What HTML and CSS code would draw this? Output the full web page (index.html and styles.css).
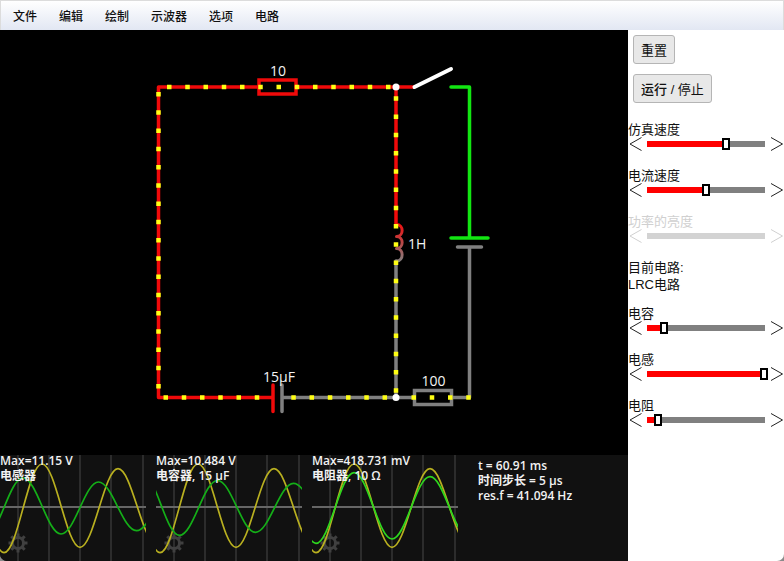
FILE: index.html
```html
<!DOCTYPE html>
<html lang="zh-CN">
<head>
<meta charset="utf-8">
<title>LRC电路</title>
<link rel="stylesheet" href="styles.css">
</head>
<body>
<div class="app">
  <nav class="menubar">
    <button type="button">文件</button>
    <button type="button">编辑</button>
    <button type="button">绘制</button>
    <button type="button">示波器</button>
    <button type="button">选项</button>
    <button type="button">电路</button>
  </nav>
  <div class="workspace">
    <main class="stage">
      <svg class="circuit" viewBox="0 30 628 425" preserveAspectRatio="xMidYMid meet">
        <defs>
          <linearGradient id="coil" gradientUnits="userSpaceOnUse" x1="0" y1="224" x2="0" y2="262">
            <stop offset="0" stop-color="#f01010"/>
            <stop offset="1" stop-color="#808080"/>
          </linearGradient>
        </defs>
        <g class="wire gray">
          <path d="M396 261V397.5M282 397.5H414M451 397.5H469.5V247M457.5 247H481.5M282 385V411.500"/>
          <rect x="414.500" y="390.500" width="37" height="14"/>
        </g>
        <g class="wire red">
          <path d="M273 397.5H158.500V87H259M296 87H414M396 87V224M273 385V411.500"/>
          <rect x="259" y="80" width="37" height="14"/>
        </g>
        <path class="wire coil" d="M396.500 224.500C404 224.500 404 236.500 396.500 236.500C404 236.500 404 248.500 396.500 248.500C404 248.500 404 261 396.500 261"/>
        <path class="wire green" d="M451 87H469.500V238M451 238H488"/>
        <path class="wire white" d="M414.500 87L451 69"/>
        <g class="charge">
          <path d="M167 87H392"/>
          <path d="M158.500 92V400"/>
          <path d="M163.500 397.500H260"/>
          <path d="M291.300 397.500H388"/>
          <path d="M411.500 397.500H471"/>
          <path d="M396 96.300V394"/>
        </g>
        <circle class="node" cx="396" cy="87" r="3.500"/>
        <circle class="node" cx="396" cy="397.500" r="3.500"/>
        <g class="value">
          <text x="278" y="76" text-anchor="middle">10</text>
          <text x="408" y="249">1H</text>
          <text x="279" y="382" text-anchor="middle">15μF</text>
          <text x="433.500" y="386" text-anchor="middle">100</text>
        </g>
      </svg>
      <section class="scopes">
        <svg class="symbols" width="0" height="0">
          <defs>
            <g id="grid">
              <path class="division" d="M18 0V106M49 0V106M80 0V106M111 0V106M143 0V106"/>
              <path class="axis" d="M0 52H146"/>
              <g class="gear" transform="translate(18 88)">
                <circle r="5.500"/>
                <path d="M0-6V-9.500M0 6V9.500M-6 0H-9.500M6 0H9.500M4.200-4.200L6.700-6.700M4.200 4.200L6.700 6.700M-4.200 4.200L-6.700 6.700M-4.200-4.200L-6.700-6.700"/>
              </g>
            </g>
            <path id="voltage" d="M-34 4C-20.200 4-9.800 97.700 4 97.700S28.200 9 42 9S66.200 92.300 80 92.300S104.200 13.700 118 13.700S142.200 88 156 88"/>
          </defs>
        </svg>
        <figure class="scope">
          <svg viewBox="0 0 146 106">
            <use href="#grid"/>
            <use class="trace-y" href="#voltage"/>
            <path class="trace-g" d="M-15 82C-1.200 82 9.200 23 23 23S47.200 79 61 79S84.800 27 98.500 27S122.700 75.700 136.500 75.700S160 31 174 31"/>
          </svg>
          <figcaption>Max=11.15 V<br>电感器</figcaption>
        </figure>
        <figure class="scope">
          <svg viewBox="0 0 146 106">
            <use href="#grid"/>
            <use class="trace-y" href="#voltage"/>
            <path class="trace-g" d="M-14 18C-.2 18 9.700 80.300 23.500 80.300S47.700 25.500 61.500 25.500S85.700 77.300 99.500 77.300S123.700 28.300 137.500 28.300S162 74 176 74"/>
          </svg>
          <figcaption>Max=10.484 V<br>电容器, 15 μF</figcaption>
        </figure>
        <figure class="scope">
          <svg viewBox="0 0 146 106">
            <use href="#grid"/>
            <use class="trace-y" href="#voltage"/>
            <path class="trace-g bright" d="M-34 14C-20.200 14-9.800 88.300 4 88.300S28.200 17.700 42 17.700S66.200 84 80 84S104.200 21.700 118 21.700S142.200 81 156 81"/>
          </svg>
          <figcaption>Max=418.731 mV<br>电阻器, 10 Ω</figcaption>
        </figure>
        <p class="info">t = 60.91 ms<br>时间步长 = 5 μs<br>res.f = 41.094 Hz</p>
      </section>
    </main>
    <aside class="panel">
      <button type="button" class="action">重置</button>
      <button type="button" class="action"><strong>运行</strong> / 停止</button>

      <div class="control">
        <label for="sim-speed">仿真速度</label>
        <div class="slider">
          <button type="button" aria-label="-"><svg viewBox="0 0 15 14"><path d="M13.500 .5L2 7L13.500 13.500"/></svg></button>
          <input id="sim-speed" type="range" min="0" max="200" value="134" style="--fill:67%">
          <button type="button" aria-label="+"><svg viewBox="0 0 15 14"><path d="M2 .5L13.500 7L2 13.500"/></svg></button>
        </div>
      </div>
      <div class="control">
        <label for="current-speed">电流速度</label>
        <div class="slider">
          <button type="button" aria-label="-"><svg viewBox="0 0 15 14"><path d="M13.500 .5L2 7L13.500 13.500"/></svg></button>
          <input id="current-speed" type="range" min="0" max="200" value="100" style="--fill:50%">
          <button type="button" aria-label="+"><svg viewBox="0 0 15 14"><path d="M2 .5L13.500 7L2 13.500"/></svg></button>
        </div>
      </div>
      <div class="control disabled">
        <label for="power">功率的亮度</label>
        <div class="slider">
          <button type="button" aria-label="-" disabled><svg viewBox="0 0 15 14"><path d="M13.500 .5L2 7L13.500 13.500"/></svg></button>
          <input id="power" type="range" disabled>
          <button type="button" aria-label="+" disabled><svg viewBox="0 0 15 14"><path d="M2 .5L13.500 7L2 13.500"/></svg></button>
        </div>
      </div>
      <p class="current">目前电路:<br>LRC电路</p>
      <div class="control">
        <label for="capacitance">电容</label>
        <div class="slider">
          <button type="button" aria-label="-"><svg viewBox="0 0 15 14"><path d="M13.500 .5L2 7L13.500 13.500"/></svg></button>
          <input id="capacitance" type="range" min="0" max="200" value="29" style="--fill:14%">
          <button type="button" aria-label="+"><svg viewBox="0 0 15 14"><path d="M2 .5L13.500 7L2 13.500"/></svg></button>
        </div>
      </div>
      <div class="control">
        <label for="inductance">电感</label>
        <div class="slider">
          <button type="button" aria-label="-"><svg viewBox="0 0 15 14"><path d="M13.500 .5L2 7L13.500 13.500"/></svg></button>
          <input id="inductance" type="range" min="0" max="200" value="199" style="--fill:99%">
          <button type="button" aria-label="+"><svg viewBox="0 0 15 14"><path d="M2 .5L13.500 7L2 13.500"/></svg></button>
        </div>
      </div>
      <div class="control">
        <label for="resistance">电阻</label>
        <div class="slider">
          <button type="button" aria-label="-"><svg viewBox="0 0 15 14"><path d="M13.500 .5L2 7L13.500 13.500"/></svg></button>
          <input id="resistance" type="range" min="0" max="200" value="19" style="--fill:9%">
          <button type="button" aria-label="+"><svg viewBox="0 0 15 14"><path d="M2 .5L13.500 7L2 13.500"/></svg></button>
        </div>
      </div>
    </aside>
  </div>
</div>
</body>
</html>
```
FILE: styles.css
```css
* { box-sizing: border-box; }

html { background: #8a8a8a; }

body {
  margin: 0;
  font: 13px/16px "Liberation Sans", "Noto Sans CJK SC", sans-serif;
  color: #111;
}

button { font: inherit; color: inherit; }

.app {
  display: flex;
  flex-direction: column;
  min-height: 100vh;
  overflow: hidden;
  border-radius: 0 0 7px 7px;
  background: #fff;
}

.menubar {
  display: flex;
  height: 30px;
  padding-left: 1px;
  border: 1px solid #dcdcdc;
  border-bottom: 0;
  background: linear-gradient(#fff, #e2e7f3);
}

.menubar button {
  padding: 2px 11px 0;
  border: 0;
  background: none;
  font-size: 12px;
  font-weight: 500;
}

.workspace { display: flex; flex: 1; }

.stage {
  display: flex;
  flex: 1;
  flex-direction: column;
  min-width: 0;
  background: #000;
}

.circuit { flex: 1; width: 100%; min-height: 0; }

.wire { fill: none; stroke-width: 3.5; stroke-linecap: round; stroke-linejoin: round; }
.wire rect { stroke-linejoin: miter; stroke-width: 3.5; }
.gray { stroke: #808080; }
.red { stroke: #f00a0a; }
.green { stroke: #12e612; }
.white { stroke: #fff; stroke-width: 4; }
.coil { stroke: url(#coil); stroke-width: 3; }
.charge { fill: none; stroke: #ffff14; stroke-width: 4.5; stroke-dasharray: 4.5 13.75; }
.node { fill: #fff; }
.value { fill: #f4f4f4; font: 14px "Open Sans", "Noto Sans CJK SC", sans-serif; }

.scopes {
  display: flex;
  gap: 10px;
  height: 106px;
  background: #111;
  color: #f2f2f2;
  font: 600 12px/15px "Open Sans", "Noto Sans CJK SC", sans-serif;
}

.symbols { position: absolute; }

.scope { position: relative; width: 146px; margin: 0; }
.scope svg { display: block; width: 100%; height: 106px; }
.scope figcaption { position: absolute; top: -2px; left: 0; white-space: nowrap; }

.division { stroke: #2c2c2c; stroke-width: 2; }
.axis { stroke: #666; stroke-width: 2; }
.gear { fill: none; stroke: #404040; stroke-width: 3; }
.trace-y { fill: none; stroke: #b9b020; stroke-width: 1.7; }
.trace-g { fill: none; stroke: #14ae18; stroke-width: 1.7; }
.trace-g.bright { stroke: #2ed61e; }

.info { margin: 3px 0 0 10px; white-space: nowrap; }

.panel { width: 156px; padding-top: 5px; }

.action {
  display: block;
  height: 29px;
  margin: 0 0 10px 5px;
  padding: 2px 7px 0;
  border: 1px solid #b5b5b5;
  border-radius: 3px;
  background: #e8e8e8;
}

.action strong { font-weight: 500; }
.action + .action { margin-bottom: 20px; }

.control { margin-bottom: 18px; }
.control label { display: block; line-height: 14px; }

.slider { display: flex; height: 14px; }

.slider button { width: 15px; padding: 0; border: 0; background: none; }
.slider svg { display: block; width: 15px; height: 14px; }
.slider path { fill: none; stroke: #222; stroke-width: 1; }

.slider input {
  --fill: 0%;
  --on: #f00;
  --off: #808080;
  flex: 1;
  min-width: 0;
  height: 14px;
  margin: 0;
  padding: 0 4px;
  appearance: none;
  background: linear-gradient(90deg, var(--on) var(--fill), var(--off) var(--fill)) center / 100% 6px no-repeat content-box;
}

.slider input::-webkit-slider-runnable-track { height: 12px; margin: 0 -4px; }

.slider input::-webkit-slider-thumb {
  appearance: none;
  width: 8px;
  height: 12px;
  border: 2px solid #000;
  background: #fff;
}

.disabled { color: #d0d0d0; margin-bottom: 16px; }
.disabled .slider path { stroke: #d0d0d0; }
.disabled .slider input { --off: #d3d3d3; --on: #d3d3d3; }
.disabled input::-webkit-slider-thumb { visibility: hidden; }

.current { margin: 0 0 14px; line-height: 17px; }
```
